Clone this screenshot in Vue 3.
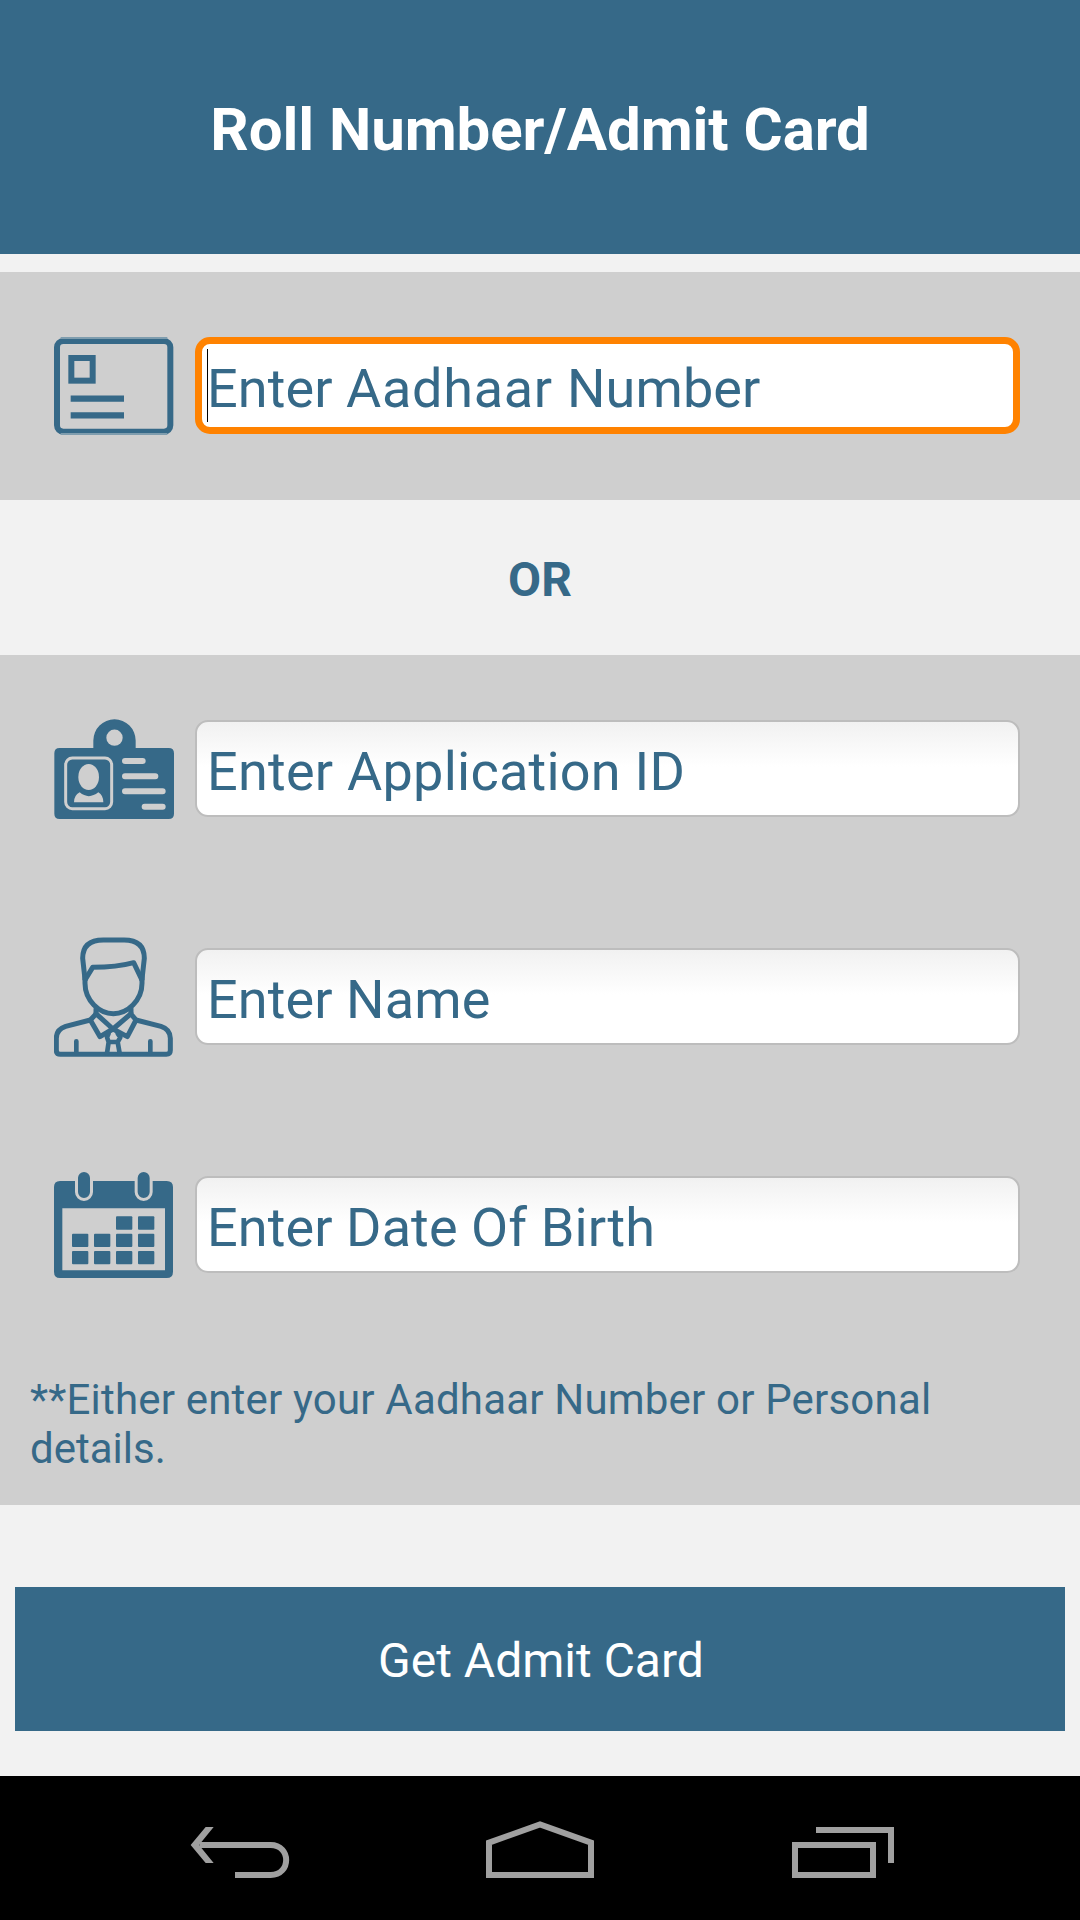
<script setup>
const fields = [
  { icon: 'badge', label: 'Enter Application ID', tracking: 0.25 },
  { icon: 'person', label: 'Enter Name', tracking: 0.1 },
  { icon: 'calendar', label: 'Enter Date Of Birth', tracking: 0.1 },
]
const days = [
  [228, 199], [294, 199],
  [96, 251], [162, 251], [228, 251], [294, 251],
  [96, 303], [162, 303], [228, 303], [294, 303],
]
</script>

<template>
  <div class="screen">
    <header class="header"><h1>Roll Number/Admit Card</h1></header>

    <section class="panel aadhaar">
      <div class="row">
        <svg class="icon" width="120" height="98" viewBox="42 51 360 294">
          <rect x="51" y="63" width="340" height="272" rx="19" fill="none" stroke="#366988" stroke-width="18" />
          <path d="M62 54H382M62 342H382" stroke="#7f9dae" stroke-width="6" />
          <rect x="94" y="114" width="64" height="68" fill="none" stroke="#366988" stroke-width="18" />
          <path d="M92 236H252M92 286H252" stroke="#366988" stroke-width="19" />
        </svg>
        <div class="field focused"><i class="caret"></i><span>Enter <span class="wide">Aadhaar </span>Number</span></div>
      </div>
    </section>

    <div class="or"><span>OR</span></div>

    <section class="panel details">
      <div v-for="f in fields" :key="f.icon" class="row">
        <svg v-if="f.icon === 'badge'" class="icon" width="120" height="100" viewBox="42 57 360 300">
          <path d="M160 144V121.500A63.500 63.500 0 0 1 287 121.500V144H386Q402 144 402 160V341Q402 357 386 357H59Q43 357 43 341V160Q43 144 59 144Z" fill="#366988" />
          <g fill="#cfcfcf">
            <circle cx="223.500" cy="113" r="24.500" />
            <ellipse cx="146" cy="231" rx="31" ry="39" />
            <path d="M102 307Q102 286 119 277Q146 300 175 277Q190 286 190 307Z" />
          </g>
          <rect x="77" y="174" width="138" height="152" rx="20" fill="none" stroke="#cfcfcf" stroke-width="9" />
          <path d="M255 183H308M255 229H346M255 274H368M314 320H368" fill="none" stroke="#cfcfcf" stroke-width="18" stroke-linecap="round" />
        </svg>
        <svg v-else-if="f.icon === 'person'" class="icon" width="120" height="120" viewBox="42 51 360 360">
          <g fill="none" stroke="#366988" stroke-width="15" stroke-linejoin="round" stroke-linecap="round">
            <path d="M135 178L128 115Q128 60 190 60H252Q313 60 313 115L306 178" />
            <path d="M136 178L158 142Q230 142 281 128L305 178" />
            <path d="M135 170V190C135 242 178 281 220 281C262 281 306 242 306 190V170" />
            <path d="M168 268V282L151 300L77 319Q49 328 49 355V391Q49 403 61 403H379Q391 403 391 391V355Q391 328 363 319L288 300L273 282V266" />
            <path d="M168 281L219 327L273 281M151 300L180 350L219 327L262 350L288 300" />
            <path d="M206 340L201 352L206 366H233L241 352L233 340M206 366L201 400M233 366L239 400" stroke-width="14" />
            <path d="M109 364V399M331 364V399" stroke-width="14" />
          </g>
        </svg>
        <svg v-else class="icon" width="120" height="106" viewBox="42 66 360 318">
          <path fill-rule="evenodd" d="M60 93H380Q399 93 399 111V365Q399 384 380 384H60Q42 384 42 365V111Q42 93 60 93ZM67 175V361H375V175Z" fill="#366988" />
          <path d="M132 84V126M311 84V126" stroke="#cfcfcf" stroke-width="54" stroke-linecap="round" />
          <path d="M132 84V126M311 84V126" stroke="#366988" stroke-width="36" stroke-linecap="round" />
          <rect v-for="d in days" :key="d.join()" :x="d[0]" :y="d[1]" width="49" height="40" rx="3" fill="#366988" />
        </svg>
        <div class="field"><span :style="{ letterSpacing: f.tracking + 'px' }">{{ f.label }}</span></div>
      </div>
      <p class="note"><span>**Either enter your Aadhaar Number or Personal</span><br>details.</p>
    </section>

    <div class="action"><button type="button">Get Admit Card</button></div>

    <nav class="nav">
      <svg width="98" height="52" viewBox="90 168 294 156">
        <path d="M118 225H332C394 225 394 315 332 315H225" fill="none" stroke="#a0a0a0" stroke-width="18" />
        <path d="M137 171H161L117 225L161 279H137L92 225Z" fill="#a0a0a0" />
      </svg>
      <svg width="108" height="58" viewBox="978 150 324 174">
        <path d="M987 315V218L1140 163L1293 218V315Z" fill="none" stroke="#a0a0a0" stroke-width="18" />
      </svg>
      <svg width="102" height="52" viewBox="156 168 306 156">
        <path d="M165 225H399V315H165ZM228 180H453V279" fill="none" stroke="#a0a0a0" stroke-width="18" />
      </svg>
    </nav>
  </div>
</template>

<style>
body { margin: 0; }
</style>

<style scoped>
.screen {
  width: 1080px;
  height: 1920px;
  display: flex;
  flex-direction: column;
  background: #f2f2f2;
  color: #366988;
  font-family: Roboto, "Liberation Sans", sans-serif;
  overflow: hidden;
}
.screen > * { box-sizing: border-box; flex: none; }
.header {
  height: 254px;
  margin-bottom: 18px;
  padding-top: 5px;
  display: flex;
  align-items: center;
  justify-content: center;
  background: #366988;
  color: #fff;
}
h1 { margin: 0; font-size: 60px; line-height: 70px; font-weight: 700; letter-spacing: -0.07px; white-space: nowrap; }
.panel { background: #cfcfcf; }
.aadhaar { height: 228px; padding-top: 54px; }
.details { height: 850px; padding-top: 54px; }
.row {
  height: 120px;
  margin-bottom: 108px;
  padding: 0 60px 0 54px;
  display: flex;
  align-items: center;
  gap: 21px;
}
.aadhaar .row { margin-bottom: 0; }
.details .row:nth-child(3) { margin-bottom: 90px; }
.icon { flex: none; overflow: hidden; }
.field {
  position: relative;
  box-sizing: border-box;
  flex: 1;
  height: 97px;
  margin-bottom: 1px;
  padding-left: 10px;
  border: 2px solid #bdbdbd;
  border-radius: 13px;
  background: linear-gradient(#f1f1f1, #fff 48%);
  font-size: 54px;
  line-height: 99px;
  white-space: nowrap;
}
.focused {
  border: 7px solid #ff8200;
  border-radius: 15px;
  background: #fff;
  padding-left: 5px;
  line-height: 89px;
}
.focused > span { letter-spacing: 0.1px; }
.focused .wide { letter-spacing: 0.7px; }
.caret { position: absolute; left: 5px; top: 5px; width: 1px; height: 73px; background: #000; }
.or {
  height: 155px;
  padding-top: 4px;
  display: flex;
  align-items: center;
  justify-content: center;
  font-size: 48px;
  font-weight: 700;
}
.note { margin: 0; padding-left: 30px; font-size: 42px; line-height: 49px; white-space: nowrap; }
.note span { letter-spacing: 0.19px; }
.action { padding: 82px 15px 45px; display: flex; }
button {
  flex: 1;
  height: 144px;
  padding: 4px 0 0 2px;
  border: 0;
  background: #366988;
  color: #fff;
  font: 400 48px/56px Roboto, "Liberation Sans", sans-serif;
}
.nav {
  height: 144px;
  display: flex;
  align-items: flex-end;
  gap: 198px;
  padding: 0 0 42px 190px;
  background: #000;
}
.nav svg { overflow: visible; }
</style>
